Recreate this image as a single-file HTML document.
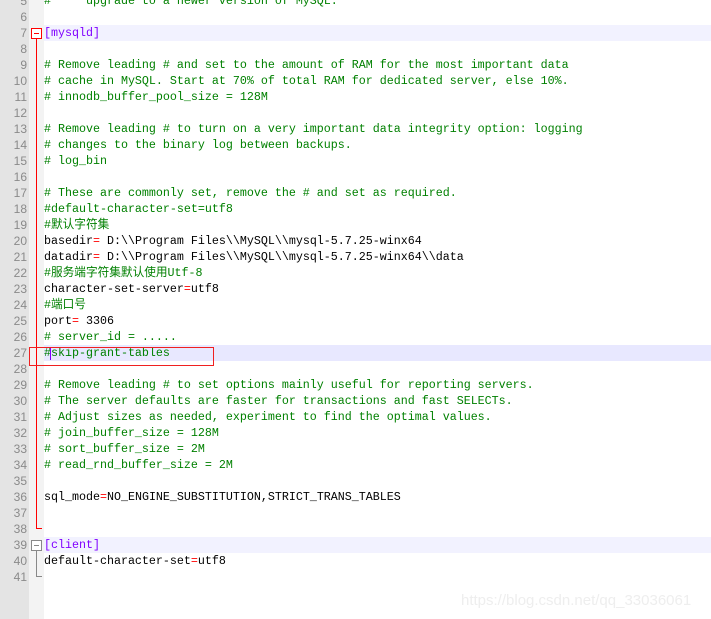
<!DOCTYPE html><html><head><style>
body{margin:0;width:711px;height:619px;overflow:hidden;background:#fff;position:relative;font-family:"Liberation Mono","Noto Sans CJK SC",monospace;font-size:11.67px}
.g{position:absolute;left:0;top:0;width:29px;height:619px;background:#e4e4e4}
.f{position:absolute;left:29px;top:0;width:15px;height:619px;background:#f3f3f3}
.n{position:absolute;left:0;width:27px;text-align:right;color:#8a8a8a;height:16px;line-height:16px;font-family:"Liberation Sans",sans-serif;font-size:12px}
.l{position:absolute;left:44px;height:16px;line-height:17px;white-space:pre;color:#000}
.c{color:#008000}.r{color:#f00}.p{color:#8000ff}
.hl{position:absolute;left:44px;right:0;height:16px}
</style></head><body>
<div class="g"></div><div class="f"></div>
<div class="hl" style="top:25px;background:#f2f2ff"></div>
<div class="hl" style="top:345px;background:#e8e8ff"></div>
<div class="hl" style="top:537px;background:#f2f2ff"></div>
<div id="nums"></div>
<div class="l c" style="top:-7px"># *** upgrade to a newer version of MySQL.</div>
<div class="l p" style="top:25px">[mysqld]</div>
<div class="l c" style="top:57px"># Remove leading # and set to the amount of RAM for the most important data</div>
<div class="l c" style="top:73px"># cache in MySQL. Start at 70% of total RAM for dedicated server, else 10%.</div>
<div class="l c" style="top:89px"># innodb_buffer_pool_size = 128M</div>
<div class="l c" style="top:121px"># Remove leading # to turn on a very important data integrity option: logging</div>
<div class="l c" style="top:137px"># changes to the binary log between backups.</div>
<div class="l c" style="top:153px"># log_bin</div>
<div class="l c" style="top:185px"># These are commonly set, remove the # and set as required.</div>
<div class="l c" style="top:201px">#default-character-set=utf8</div>
<div class="l c" style="top:217px">#默认字符集</div>
<div class="l" style="top:233px">basedir<span class="r">=</span> D:\\Program Files\\MySQL\\mysql-5.7.25-winx64</div>
<div class="l" style="top:249px">datadir<span class="r">=</span> D:\\Program Files\\MySQL\\mysql-5.7.25-winx64\\data</div>
<div class="l c" style="top:265px">#服务端字符集默认使用Utf-8</div>
<div class="l" style="top:281px">character-set-server<span class="r">=</span>utf8</div>
<div class="l c" style="top:297px">#端口号</div>
<div class="l" style="top:313px">port<span class="r">=</span> 3306</div>
<div class="l c" style="top:329px"># server_id = .....</div>
<div class="l c" style="top:345px">#skip-grant-tables</div>
<div class="l c" style="top:377px"># Remove leading # to set options mainly useful for reporting servers.</div>
<div class="l c" style="top:393px"># The server defaults are faster for transactions and fast SELECTs.</div>
<div class="l c" style="top:409px"># Adjust sizes as needed, experiment to find the optimal values.</div>
<div class="l c" style="top:425px"># join_buffer_size = 128M</div>
<div class="l c" style="top:441px"># sort_buffer_size = 2M</div>
<div class="l c" style="top:457px"># read_rnd_buffer_size = 2M</div>
<div class="l" style="top:489px">sql_mode<span class="r">=</span>NO_ENGINE_SUBSTITUTION,STRICT_TRANS_TABLES</div>
<div class="l p" style="top:537px">[client]</div>
<div class="l" style="top:553px">default-character-set<span class="r">=</span>utf8</div>
<div style="position:absolute;left:31px;top:28px;width:9px;height:9px;border:1px solid #f00;background:#fff"><div style="position:absolute;left:2px;top:4px;width:5px;height:1px;background:#f00"></div></div>
<div style="position:absolute;left:36px;top:39px;width:1px;height:490px;background:#f00"></div>
<div style="position:absolute;left:36px;top:528px;width:6px;height:1px;background:#f00"></div>
<div style="position:absolute;left:31px;top:540px;width:9px;height:9px;border:1px solid #888;background:#fff"><div style="position:absolute;left:2px;top:4px;width:5px;height:1px;background:#888"></div></div>
<div style="position:absolute;left:36px;top:551px;width:1px;height:26px;background:#888"></div>
<div style="position:absolute;left:36px;top:576px;width:6px;height:1px;background:#888"></div>
<div style="position:absolute;left:50px;top:347px;width:1px;height:13px;background:#8000ff"></div>
<div style="position:absolute;left:29px;top:347px;width:183px;height:17px;border:1px solid #f02020"></div>
<div style="position:absolute;left:461px;top:592px;color:#eeeeee;font-family:'Liberation Sans',sans-serif;font-size:15px">https://blog.csdn.net/qq_33036061</div>
<script>
var h='';for(var n=5;n<=41;n++){h+='<div class="n" style="top:'+(16*n-87)+'px">'+n+'</div>';}document.getElementById('nums').innerHTML=h;
</script>
</body></html>
